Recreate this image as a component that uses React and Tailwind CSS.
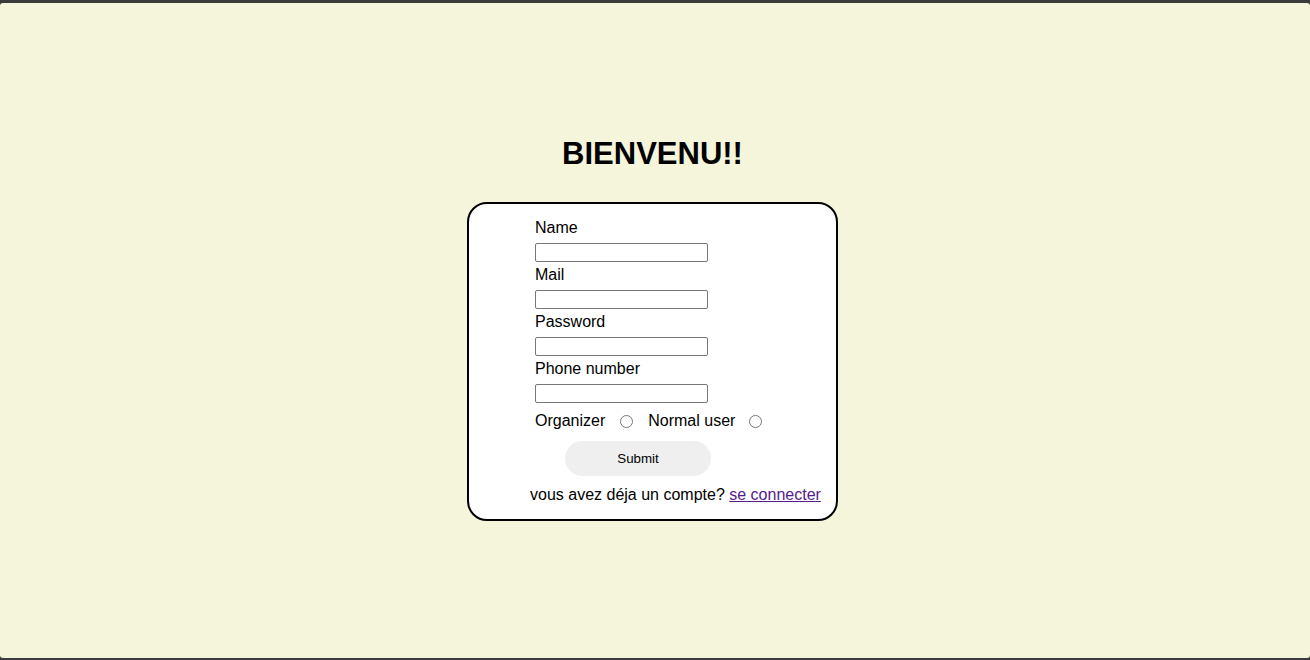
import React, { useState } from 'react'

const fields = [
  { name: 'name', label: 'Name', type: 'text' },
  { name: 'mail', label: 'Mail', type: 'email' },
  { name: 'password', label: 'Password', type: 'password' },
  { name: 'phone', label: 'Phone number', type: 'tel' },
]

const App = () => {
  const [form, setForm] = useState({ name: '', mail: '', password: '', phone: '', role: '' })

  const handleChange = (fieldName, e) => {
    setForm({ ...form, [fieldName]: e.target.value })
  }

  return (
    <div className="w-[1310px] h-[660px] bg-[#3b3b3b] pt-[3px] pb-[2px] font-['Liberation_Sans',Arial,sans-serif] text-black">
      <div className="h-full bg-[#f5f5dc] rounded-[3px] flex flex-col items-center pt-[133px] pr-[5px]">
        <h1 className="text-[31px] leading-[36px] font-bold">BIENVENU!!</h1>

        <form
          onSubmit={(e) => e.preventDefault()}
          className="mt-[30px] w-[371px] h-[319px] bg-white border-2 border-black rounded-[20px] pt-[15px] pl-[66px]"
        >
          {fields.map((f) => (
            <div key={f.name} className="flex flex-col">
              <label className="text-[16px] leading-[18px]">{f.label}</label>
              <input
                type={f.type}
                value={form[f.name]}
                onChange={(e) => handleChange(f.name, e)}
                className="mt-[6px] mb-[4px] w-[173px] h-[19px] border border-[#767676] rounded-[2px] bg-white px-[2px] text-[13px]"
              />
            </div>
          ))}

          <div className="mt-[5px] flex items-center h-[18px] text-[16px] leading-[18px]">
            <span>Organizer</span>
            <input
              type="radio"
              name="role"
              value="organizer"
              onChange={(e) => handleChange('role', e)}
              className="ml-[15px] w-[13px] h-[13px]"
            />
            <span className="ml-[15px]">Normal user</span>
            <input
              type="radio"
              name="role"
              value="normal"
              onChange={(e) => handleChange('role', e)}
              className="ml-[14px] w-[13px] h-[13px]"
            />
          </div>

          <button
            type="submit"
            className="mt-[11px] ml-[30px] w-[146px] h-[35px] rounded-full bg-[#efefef] text-[13.33px] text-black"
          >
            Submit
          </button>

          <p className="mt-[10px] -ml-[5px] text-[16px] leading-[18px] whitespace-nowrap">
            vous avez déja un compte?{' '}
            <a href="#" className="text-[#551a8b] underline">se connecter</a>
          </p>
        </form>
      </div>
    </div>
  )
}

export default App
